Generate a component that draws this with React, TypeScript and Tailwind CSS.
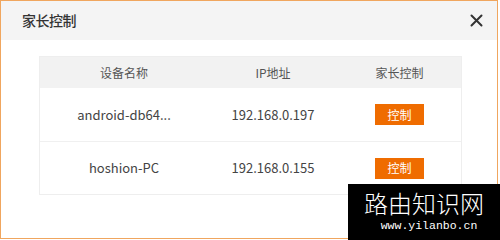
const ROWS = [
  { name: "android-db64...", ip: "192.168.0.197" },
  { name: "hoshion-PC", ip: "192.168.0.155" },
];

export default function App() {
  return (
    <div className="relative w-[500px] h-[240px] bg-white overflow-hidden font-['Noto_Sans_CJK_SC','Open_Sans',sans-serif]">
      <div className="w-[498px] h-[239px] border border-[#f0a65e] bg-white flex flex-col">
        {/* Header */}
        <div className="h-[39px] shrink-0 bg-[#f4f4f4] flex items-center justify-between pl-[21px] pr-[14px]">
          <span className="text-[14px] font-medium text-[#333] tracking-[-0.5px]">家长控制</span>
          <svg width="13" height="13" viewBox="0 0 13 13" className="text-[#333]">
            <path d="M1.5 1.5 L11.5 11.5 M11.5 1.5 L1.5 11.5" stroke="currentColor" strokeWidth="2" strokeLinecap="round" />
          </svg>
        </div>

        {/* Table */}
        <div className="pl-[38px] pt-[16px]">
          <div className="w-[423px] border border-[#eeeeee] text-[12px] text-[#444]">
            <div className="flex h-[31px] bg-[#f2f2f2] items-center text-[#555]">
              <div className="w-[168px] text-center">设备名称</div>
              <div className="w-[130px] text-center">IP地址</div>
              <div className="flex-1 text-center">家长控制</div>
            </div>
            {ROWS.map((r, i) => (
              <div key={r.ip} className={`flex h-[53px] items-center text-[13px] ${i > 0 ? "border-t border-[#f0f0f0]" : ""}`}>
                <div className="w-[168px] text-center">{r.name}</div>
                <div className="w-[130px] text-center">{r.ip}</div>
                <div className="flex-1 flex justify-center">
                  <button className="w-[49px] h-[21px] bg-[#ef6c00] text-white text-[12px] leading-none flex items-center justify-center">
                    控制
                  </button>
                </div>
              </div>
            ))}
          </div>
        </div>
      </div>

      {/* Watermark */}
      <div className="absolute left-[348px] top-[184px] w-[152px] h-[56px] bg-black flex flex-col items-center">
        <span className="mt-[7px] text-[24px] leading-[24px] text-white font-light">路由知识网</span>
        <span className="mt-[5px] ml-[10px] text-[11.5px] leading-[12px] text-white font-['Liberation_Mono',monospace]">www.yilanbo.cn</span>
      </div>
    </div>
  );
}
